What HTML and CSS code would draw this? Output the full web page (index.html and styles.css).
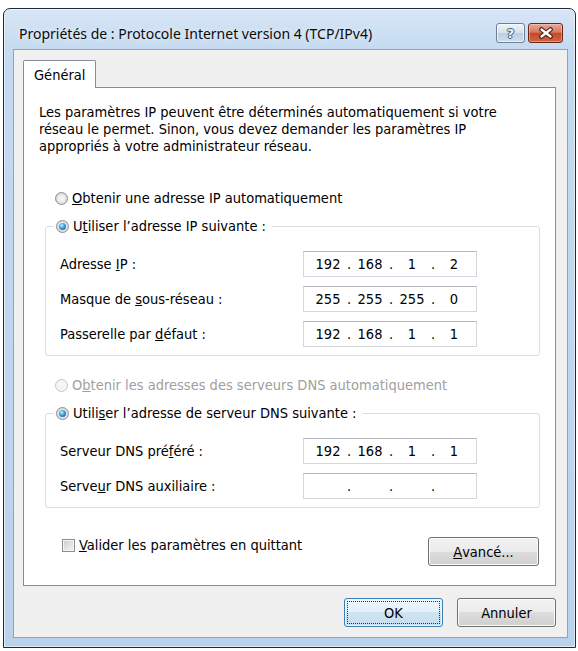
FILE: index.html
```html
<!DOCTYPE html>
<html lang="fr">
<head>
    <meta charset="UTF-8">
    <title>Propriétés de : Protocole Internet version 4 (TCP/IPv4)</title>
    <link rel="stylesheet" href="styles.css">
</head>
<body>

<div class="window">
    <div class="titlebar">
        <span class="title">Propriétés de : Protocole Internet version 4 (TCP/IPv4)</span>
        <div class="caption-buttons">
            <span class="cap help">?</span>
            <span class="cap close">
                <svg width="16" height="12" viewBox="0 0 16 12">
                    <path d="M3.5 2.5 L12.5 9.5 M12.5 2.5 L3.5 9.5" stroke="#4a1c12" stroke-width="4.6" stroke-linecap="round"/>
                    <path d="M3.5 2.5 L12.5 9.5 M12.5 2.5 L3.5 9.5" stroke="#ffffff" stroke-width="2.4" stroke-linecap="round"/>
                </svg>
            </span>
        </div>
    </div>

    <div class="client">
        <div class="tabs">
            <span class="tab">Général</span>
        </div>

        <div class="page">
            <p class="intro">Les paramètres IP peuvent être déterminés automatiquement si votre<br>réseau le permet. Sinon, vous devez demander les paramètres IP<br>appropriés à votre administrateur réseau.</p>

            <!-- IP address -->
            <div class="option first"><span class="radio"></span><span><u>O</u>btenir une adresse IP automatiquement</span></div>
            <fieldset class="group">
                <legend class="option"><span class="radio on"></span><span>U<u>t</u>iliser l’adresse IP suivante :</span></legend>
                <div class="row">
                    <span class="row-label">Adresse <u>I</u>P :</span>
                    <div class="ip"><span class="octet">192</span><span class="dot">.</span><span class="octet">168</span><span class="dot">.</span><span class="octet">1</span><span class="dot">.</span><span class="octet">2</span></div>
                </div>
                <div class="row">
                    <span class="row-label">Masque de <u>s</u>ous-réseau :</span>
                    <div class="ip"><span class="octet">255</span><span class="dot">.</span><span class="octet">255</span><span class="dot">.</span><span class="octet">255</span><span class="dot">.</span><span class="octet">0</span></div>
                </div>
                <div class="row">
                    <span class="row-label">Passerelle par <u>d</u>éfaut :</span>
                    <div class="ip"><span class="octet">192</span><span class="dot">.</span><span class="octet">168</span><span class="dot">.</span><span class="octet">1</span><span class="dot">.</span><span class="octet">1</span></div>
                </div>
            </fieldset>

            <!-- DNS -->
            <div class="option second disabled"><span class="radio"></span><span>O<u>b</u>tenir les adresses des serveurs DNS automatiquement</span></div>
            <fieldset class="group">
                <legend class="option"><span class="radio on"></span><span>Utili<u>s</u>er l’adresse de serveur DNS suivante :</span></legend>
                <div class="row">
                    <span class="row-label">Serveur DNS pré<u>f</u>éré :</span>
                    <div class="ip"><span class="octet">192</span><span class="dot">.</span><span class="octet">168</span><span class="dot">.</span><span class="octet">1</span><span class="dot">.</span><span class="octet">1</span></div>
                </div>
                <div class="row">
                    <span class="row-label">Serve<u>u</u>r DNS auxiliaire :</span>
                    <div class="ip"><span class="octet"></span><span class="dot">.</span><span class="octet"></span><span class="dot">.</span><span class="octet"></span><span class="dot">.</span><span class="octet"></span></div>
                </div>
            </fieldset>

            <div class="page-footer">
                <div class="check"><span class="checkbox"></span><span><u>V</u>alider les paramètres en quittant</span></div>
                <button type="button" class="btn advanced"><u>A</u>vancé...</button>
            </div>
        </div>

        <div class="dialog-buttons">
            <button type="button" class="btn default"><span class="focus">OK</span></button>
            <button type="button" class="btn">Annuler</button>
        </div>
    </div>
</div>

</body>
</html>
```

FILE: styles.css
```css
body {
    margin: 0;
    background-color: #fff;
    font-family: "DejaVu Sans Condensed", "DejaVu Sans", sans-serif;
    font-size: 14.5px;
    color: #000;
}
.window {
    width: 573px;
    height: 640px;
    margin: 8px 0 0 3px;
    box-sizing: border-box;
    padding: 0 7px 9px 9px;
    display: flex;
    flex-direction: column;
    border: 1px solid #1d2c3c;
    border-radius: 7px 7px 0 0;
    background: linear-gradient(to bottom, #d8e6f6 0, #c5daf0 40px, #bad2ec 100%);
    box-shadow: inset 0 0 0 1px rgba(255, 255, 255, 0.55);
}

/* title bar */
.titlebar {
    height: 40px;
    box-sizing: border-box;
    padding: 8px 5px 0 6px;
    display: flex;
    align-items: center;
    justify-content: space-between;
}
.title {
    font-family: "Noto Sans", sans-serif;
    font-size: 14px;
    color: #0b0b0b;
    text-shadow: 0 0 6px rgba(255, 255, 255, 0.9);
}
.caption-buttons {
    display: flex;
    gap: 3px;
}
.cap {
    height: 20px;
    box-sizing: border-box;
    border-radius: 3px;
    display: flex;
    align-items: center;
    justify-content: center;
}
.help {
    width: 29px;
    border: 1px solid #6f7f95;
    background: linear-gradient(to bottom, #eef3f9 0, #d5e1ee 50%, #bccde0 50%, #cfdeee 100%);
    box-shadow: inset 0 0 0 1px rgba(255, 255, 255, 0.6);
    font-family: "DejaVu Sans", sans-serif;
    font-weight: bold;
    font-size: 13px;
    color: #eef2f7;
    text-shadow: -1px 0 #4a5a70, 1px 0 #4a5a70, 0 -1px #4a5a70, 0 1px #4a5a70;
}
.close {
    width: 35px;
    border: 1px solid #6b2619;
    background: linear-gradient(to bottom, #eaa896 0, #d77a63 45%, #c24a2e 52%, #d2663f 100%);
    box-shadow: inset 0 0 0 1px rgba(255, 220, 210, 0.4);
}

/* client area */
.client {
    flex: 1;
    display: flex;
    flex-direction: column;
    padding: 10px 11px 10px 9px;
    border: 1px solid #8ea3bd;
    background-color: #f0f0f0;
}
.tabs {
    height: 27px;
    display: flex;
}
.tab {
    height: 28px;
    box-sizing: border-box;
    padding: 0 10px;
    margin-bottom: -1px;
    display: flex;
    align-items: center;
    position: relative;
    z-index: 1;
    border: 1px solid #898c95;
    border-bottom: none;
    border-radius: 2px 2px 0 0;
    background-color: #fff;
}
.page {
    flex: 1;
    padding-top: 16px;
    border: 1px solid #898c95;
    background-color: #fff;
}
.intro {
    margin: 0 0 0 15px;
    line-height: 17px;
    white-space: nowrap;
}

/* radio options and group boxes */
.option {
    height: 17px;
    line-height: 17px;
    display: flex;
    align-items: center;
    gap: 4px;
    white-space: nowrap;
}
.option.first {
    margin: 35px 0 0 31px;
}
.option.second {
    margin: 21px 0 0 31px;
}
.option.disabled {
    color: #a0a0a0;
}
.radio {
    width: 13px;
    height: 13px;
    flex: none;
    box-sizing: border-box;
    position: relative;
    border: 1px solid #8e8f8f;
    border-radius: 50%;
    background: radial-gradient(circle, #f7f7f7 0, #f0f0f0 35%, #d6d6d6 75%, #c4c4c4 100%);
}
.radio.on::after {
    content: "";
    position: absolute;
    left: 2px;
    top: 2px;
    width: 7px;
    height: 7px;
    border-radius: 50%;
    background: radial-gradient(circle at 40% 35%, #c8f0ff 0, #3b9de0 45%, #0c4c8f 100%);
}
.disabled .radio {
    border-color: #c6c6c6;
    background: #f4f4f4;
}
.group {
    margin: 11px 15px 0 21px;
    padding: 16px 0 8px 0;
    min-width: 0;
    border: 1px solid #d5dfe5;
    border-radius: 3px;
}
.group legend {
    margin-left: 7px;
    padding: 0 6px 0 3px;
}
.row {
    height: 26px;
    margin-left: 14px;
    display: flex;
    align-items: center;
}
.row + .row {
    margin-top: 9px;
}
.row-label {
    width: 243px;
    flex: none;
}
.ip {
    width: 174px;
    height: 26px;
    box-sizing: border-box;
    padding-left: 5px;
    display: flex;
    align-items: center;
    border: 1px solid #d3d7dc;
    border-top-color: #b3b8bf;
    background-color: #fff;
}
.octet {
    width: 38px;
    text-align: center;
}
.dot {
    width: 4px;
    text-align: center;
}

/* footer of the page */
.page-footer {
    margin: 29px 16px 0 38px;
    display: flex;
    justify-content: space-between;
    align-items: flex-start;
}
.check {
    line-height: 17px;
    display: flex;
    align-items: center;
    gap: 4px;
}
.checkbox {
    width: 13px;
    height: 13px;
    box-sizing: border-box;
    border: 1px solid #8e8f8f;
    background: linear-gradient(135deg, #c9ccd1 0, #f6f6f6 100%);
    box-shadow: inset 0 0 0 1px #f4f4f4;
}

/* push buttons */
.btn {
    height: 29px;
    padding: 0;
    font: inherit;
    color: #000;
    display: flex;
    align-items: center;
    justify-content: center;
    border: 1px solid #707070;
    border-radius: 3px;
    background: linear-gradient(to bottom, #f2f2f2 0, #ebebeb 50%, #dddddd 50%, #cfcfcf 100%);
    box-shadow: inset 0 0 0 1px #fbfbfb;
}
.advanced {
    width: 111px;
}
.dialog-buttons {
    margin-top: 12px;
    display: flex;
    justify-content: flex-end;
    gap: 14px;
}
.dialog-buttons .btn {
    width: 99px;
}
.btn.default {
    padding: 2px;
    border-color: #3c7fb1;
    background: linear-gradient(to bottom, #f0f7fc 0, #e2eff8 50%, #cfe4f2 50%, #c5ddee 100%);
    box-shadow: inset 0 0 0 1px #e9f5fc;
}
.focus {
    width: 100%;
    height: 100%;
    box-sizing: border-box;
    display: flex;
    align-items: center;
    justify-content: center;
    border: 1px dotted #333;
}
```
